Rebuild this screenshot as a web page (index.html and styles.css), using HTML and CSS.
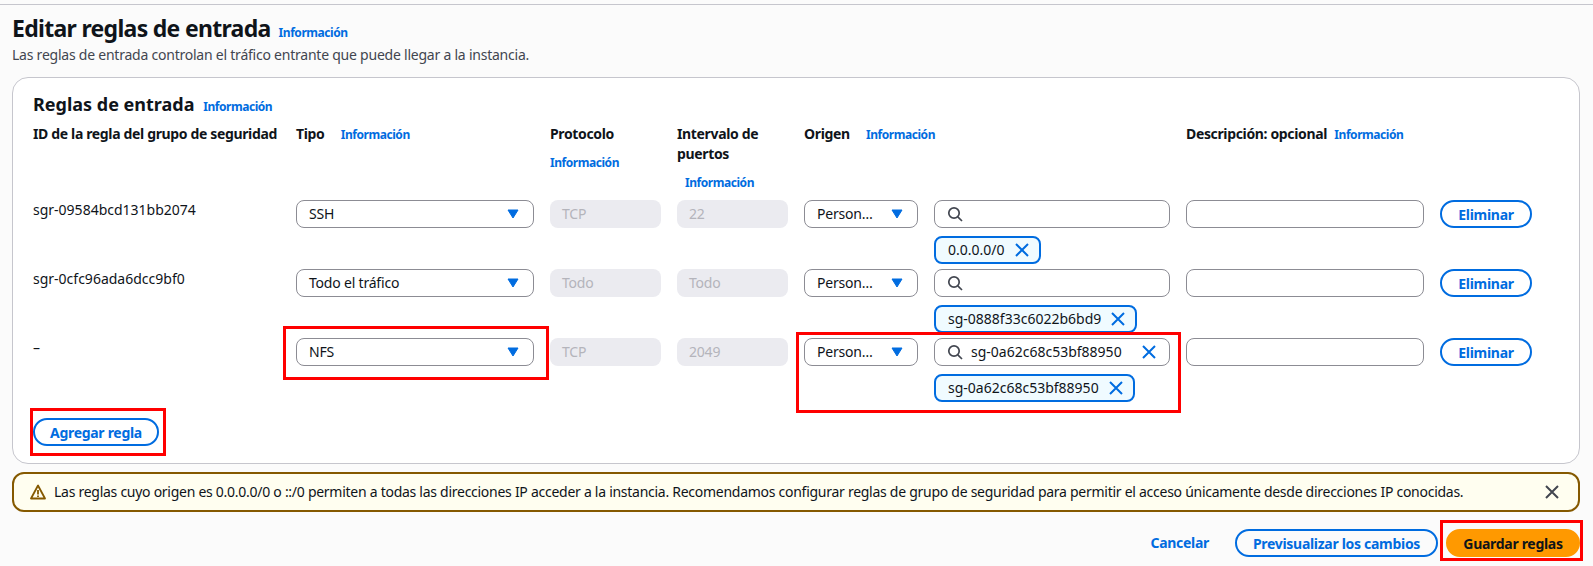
FILE: index.html
```html
<!DOCTYPE html>
<html lang="es">
<head>
<meta charset="UTF-8">
<meta name="viewport" content="width=device-width, initial-scale=1.0">
<title>Editar reglas de entrada</title>
<link rel="stylesheet" href="styles.css">
</head>
<body>

<svg class="icon-defs" aria-hidden="true">
    <symbol id="icon-x" viewBox="0 0 16 16"><path d="M2 2l12 12M14 2L2 14" fill="none" stroke="currentColor" stroke-width="2"/></symbol>
    <symbol id="icon-search" viewBox="0 0 16 16"><circle cx="7" cy="7" r="5.2" fill="none" stroke="currentColor" stroke-width="1.7"/><path d="M10.8 10.8L15 15" fill="none" stroke="currentColor" stroke-width="1.7"/></symbol>
    <symbol id="icon-caret" viewBox="0 0 12 10"><path d="M1 1h10L6 9z" fill="currentColor" stroke="currentColor" stroke-linejoin="round"/></symbol>
    <symbol id="icon-warning" viewBox="0 0 16 16"><path d="M8 1.5L1 14.5h14z" fill="none" stroke="currentColor" stroke-width="1.8" stroke-linejoin="round"/><path d="M8 6v4.5M8 11.6v1.5" fill="none" stroke="currentColor" stroke-width="1.8"/></symbol>
</svg>

<div class="top-line"></div>

<header class="page-head">
    <h1>Editar reglas de entrada<a class="info">Información</a></h1>
    <p>Las reglas de entrada controlan el tráfico entrante que puede llegar a la instancia.</p>
</header>

<section class="card">
    <h2>Reglas de entrada <a class="info">Información</a></h2>

    <div class="rules">
        <!-- Header -->
        <div class="th">ID de la regla del grupo de seguridad</div>
        <div class="th">Tipo <a class="info gap-info">Información</a></div>
        <div class="th">Protocolo<a class="info block-info">Información</a></div>
        <div class="th">Intervalo de puertos<a class="info block-info indent-info">Información</a></div>
        <div class="th th-wide">Origen <a class="info gap-info">Información</a></div>
        <div class="th">Descripción: opcional <a class="info">Información</a></div>
        <div class="th"></div>

        <!-- Rule 1 -->
        <div class="rule-id">sgr-09584bcd131bb2074</div>
        <div class="select"><span>SSH</span><svg class="caret"><use href="#icon-caret"/></svg></div>
        <div class="input-off">TCP</div>
        <div class="input-off">22</div>
        <div class="select"><span>Person…</span><svg class="caret"><use href="#icon-caret"/></svg></div>
        <div>
            <div class="search"><svg class="search-icon"><use href="#icon-search"/></svg></div>
            <div class="token">0.0.0.0/0<svg class="x-icon"><use href="#icon-x"/></svg></div>
        </div>
        <div class="input"></div>
        <button class="btn">Eliminar</button>

        <!-- Rule 2 -->
        <div class="rule-id">sgr-0cfc96ada6dcc9bf0</div>
        <div class="select"><span>Todo el tráfico</span><svg class="caret"><use href="#icon-caret"/></svg></div>
        <div class="input-off">Todo</div>
        <div class="input-off">Todo</div>
        <div class="select"><span>Person…</span><svg class="caret"><use href="#icon-caret"/></svg></div>
        <div>
            <div class="search"><svg class="search-icon"><use href="#icon-search"/></svg></div>
            <div class="token">sg-0888f33c6022b6bd9<svg class="x-icon"><use href="#icon-x"/></svg></div>
        </div>
        <div class="input"></div>
        <button class="btn">Eliminar</button>

        <!-- Rule 3 -->
        <div class="rule-id">–</div>
        <div class="select"><span>NFS</span><svg class="caret"><use href="#icon-caret"/></svg></div>
        <div class="input-off">TCP</div>
        <div class="input-off">2049</div>
        <div class="select"><span>Person…</span><svg class="caret"><use href="#icon-caret"/></svg></div>
        <div>
            <div class="search"><svg class="search-icon"><use href="#icon-search"/></svg><span>sg-0a62c68c53bf88950</span><svg class="x-icon search-clear"><use href="#icon-x"/></svg></div>
            <div class="token">sg-0a62c68c53bf88950<svg class="x-icon"><use href="#icon-x"/></svg></div>
        </div>
        <div class="input"></div>
        <button class="btn">Eliminar</button>
    </div>

    <button class="btn add-btn">Agregar regla</button>
</section>

<div class="flash">
    <svg class="warn-icon"><use href="#icon-warning"/></svg>
    <span class="flash-text">Las reglas cuyo origen es 0.0.0.0/0 o ::/0 permiten a todas las direcciones IP acceder a la instancia. Recomendamos configurar reglas de grupo de seguridad para permitir el acceso únicamente desde direcciones IP conocidas.</span>
    <svg class="flash-close"><use href="#icon-x"/></svg>
</div>

<footer class="actions">
    <a class="cancel">Cancelar</a>
    <button class="btn preview-btn">Previsualizar los cambios</button>
    <button class="btn save-btn">Guardar reglas</button>
</footer>

<!-- Red marks drawn over the screenshot -->
<div class="mark mark-type"></div>
<div class="mark mark-add"></div>
<div class="mark mark-origin"></div>
<div class="mark mark-save"></div>

</body>
</html>
```

FILE: styles.css
```css
body {
    position: relative;
    margin: 0;
    height: 566px;
    overflow: hidden;
    background-color: #fbfbfb;
    color: #0f141a;
    font-family: "Noto Sans", sans-serif;
    font-size: 14px;
    line-height: 20px;
}
.icon-defs {
    display: none;
}
.top-line {
    margin-top: 4px;
    height: 1px;
    background-color: #c6c6cd;
}
.page-head {
    padding: 8px 12px 0;
}
h1 {
    margin: 0;
    font-size: 23px;
    line-height: 30px;
    font-weight: 700;
    letter-spacing: -0.7px;
}
.page-head p {
    margin: 2px 0 0;
    color: #424650;
    letter-spacing: -0.23px;
}
.info {
    margin-left: 4px;
    color: #006ce0;
    font-size: 12px;
    font-weight: 700;
    line-height: 20px;
    letter-spacing: -0.45px;
}
h1 .info {
    margin-left: 8px;
}
.gap-info {
    margin-left: 13px;
}
.block-info {
    display: block;
    margin: 9px 0 0;
}
.indent-info {
    margin-left: 8px;
}
.card {
    margin: 12px 13px 0 12px;
    padding: 14px 20px 17px;
    background-color: #fff;
    border: 1px solid #c6c6cd;
    border-radius: 16px;
}
h2 {
    margin: 0 0 7px;
    font-size: 18px;
    line-height: 24px;
    font-weight: 700;
}
.rules {
    display: grid;
    grid-template-columns: 247px 238px 111px 111px 114px 236px 238px 92px;
    column-gap: 16px;
    row-gap: 4px;
    grid-auto-rows: 65px;
    grid-template-rows: 72px;
}
.th {
    font-weight: 700;
    letter-spacing: -0.35px;
    white-space: nowrap;
}
.th:nth-child(4) {
    white-space: normal;
}
.th-wide {
    grid-column: span 2;
}
.select,
.input,
.search {
    display: flex;
    align-items: center;
    box-sizing: border-box;
    height: 28px;
    background-color: #fff;
    border: 1px solid #8c8c94;
    border-radius: 8px;
}
.select {
    justify-content: space-between;
    padding: 0 14px 0 12px;
    letter-spacing: -0.2px;
}
.caret {
    width: 12px;
    height: 10px;
    color: #006ce0;
}
.input-off {
    box-sizing: border-box;
    height: 28px;
    padding: 4px 12px;
    background-color: #ebebf0;
    border-radius: 8px;
    color: #b4b4bb;
    letter-spacing: -0.2px;
}
.search {
    padding: 0 12px;
}
.search-icon {
    flex: none;
    width: 16px;
    height: 16px;
    margin-right: 8px;
    color: #424650;
}
.x-icon {
    flex: none;
    width: 16px;
    height: 16px;
    margin-left: 9px;
    color: #006ce0;
}
.search .search-clear {
    margin-left: auto;
}
.token {
    display: flex;
    align-items: center;
    box-sizing: border-box;
    width: fit-content;
    height: 28px;
    margin-top: 8px;
    padding: 0 9px 0 12px;
    background-color: #f0fbff;
    border: 2px solid #006ce0;
    border-radius: 8px;
}
.btn {
    box-sizing: border-box;
    height: 28px;
    padding: 0;
    background-color: transparent;
    border: 2px solid #006ce0;
    border-radius: 20px;
    color: #006ce0;
    font-family: inherit;
    font-size: 14px;
    font-weight: 700;
    letter-spacing: -0.3px;
    white-space: nowrap;
}
.add-btn {
    display: block;
    width: 126px;
    margin-top: 15px;
}
.flash {
    display: flex;
    align-items: center;
    box-sizing: border-box;
    height: 40px;
    margin: 8px 13px 0 12px;
    padding: 0 18px 0 16px;
    background-color: #fffef0;
    border: 2px solid #855900;
    border-radius: 12px;
}
.warn-icon {
    flex: none;
    width: 16px;
    height: 16px;
    margin-right: 8px;
    color: #855900;
}
.flash-text {
    letter-spacing: -0.27px;
    white-space: nowrap;
}
.flash-close {
    flex: none;
    width: 16px;
    height: 16px;
    margin-left: auto;
    color: #424650;
}
.actions {
    display: flex;
    justify-content: flex-end;
    align-items: center;
    margin: 17px 13px 0 0;
}
.cancel {
    margin-right: 26px;
    color: #006ce0;
    font-weight: 700;
    letter-spacing: -0.3px;
}
.preview-btn {
    width: 203px;
}
.save-btn {
    width: 134px;
    margin-left: 8px;
    background-color: #ff9900;
    border-color: #ff9900;
    color: #0f141a;
}
.mark {
    position: absolute;
    box-sizing: border-box;
    border: 3px solid #ff0000;
}
.mark-type {
    left: 283px;
    top: 326px;
    width: 266px;
    height: 54px;
}
.mark-add {
    left: 30px;
    top: 408px;
    width: 136px;
    height: 48px;
}
.mark-origin {
    left: 796px;
    top: 332px;
    width: 385px;
    height: 81px;
}
.mark-save {
    left: 1440px;
    top: 520px;
    width: 143px;
    height: 41px;
}
```
